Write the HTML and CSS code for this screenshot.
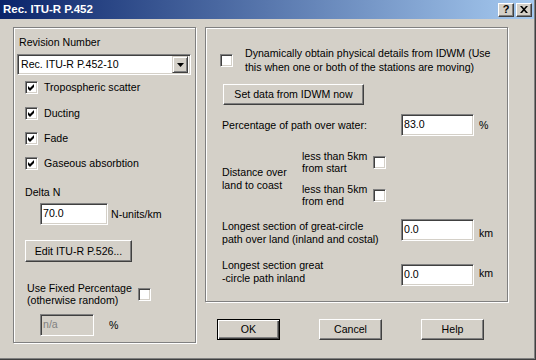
FILE: index.html
```html
<!DOCTYPE html>
<html lang="en">
<head>
  <meta charset="UTF-8" />
  <title>Rec. ITU-R P.452</title>
  <link rel="stylesheet" href="styles.css">
</head>
<body>

<div class="window">
  <div class="titlebar">
    <span class="title">Rec. ITU-R P.452</span>
    <div class="caption-btns">
      <span class="cap-btn">?</span>
      <span class="cap-btn">
        <svg width="8" height="7" viewBox="0 0 8 7"><path d="M0 0h2l2 2.2L6 0h2L5 3.5 8 7H6L4 4.8 2 7H0l3-3.5z" fill="#000"/></svg>
      </span>
    </div>
  </div>

  <div class="client">
    <!-- left group -->
    <div class="group left-group">
      <div class="lbl">Revision Number</div>
      <div class="combo">
        <span class="combo-text">Rec. ITU-R P.452-10</span>
        <span class="drop"><svg width="7" height="4" viewBox="0 0 7 4"><path d="M0 0h7L3.5 4z" fill="#000"/></svg></span>
      </div>
      <div class="checks">
        <div class="check-row"><span class="check on"><svg width="11" height="11" viewBox="0 0 11 11"><path d="M2 4l2 2 4-4v3l-4 4-2-2z" fill="#000"/></svg></span>Tropospheric scatter</div>
        <div class="check-row"><span class="check on"><svg width="11" height="11" viewBox="0 0 11 11"><path d="M2 4l2 2 4-4v3l-4 4-2-2z" fill="#000"/></svg></span>Ducting</div>
        <div class="check-row"><span class="check on"><svg width="11" height="11" viewBox="0 0 11 11"><path d="M2 4l2 2 4-4v3l-4 4-2-2z" fill="#000"/></svg></span>Fade</div>
        <div class="check-row"><span class="check on"><svg width="11" height="11" viewBox="0 0 11 11"><path d="M2 4l2 2 4-4v3l-4 4-2-2z" fill="#000"/></svg></span>Gaseous absorbtion</div>
      </div>
      <div class="lbl delta-label">Delta N</div>
      <div class="delta-row">
        <span class="field delta-field">70.0</span>
        <span>N-units/km</span>
      </div>
      <button class="btn edit-btn">Edit ITU-R P.526...</button>
      <div class="fixed-row">
        <span class="tight">Use Fixed Percentage<br>(otherwise random)</span>
        <span class="check"></span>
      </div>
      <div class="na-row">
        <span class="field disabled na-field">n/a</span>
        <span>%</span>
      </div>
    </div>

    <!-- right column -->
    <div class="right-col">
      <div class="group right-group">
        <div class="dyn-row">
          <span class="check"></span>
          <span class="dyn-text">Dynamically obtain physical details from IDWM (Use<br>this when one or both of the stations are moving)</span>
        </div>
        <button class="btn idwm-btn">Set data from IDWM now</button>

        <div class="form-row water-row">
          <span>Percentage of path over water:</span>
          <span class="field num-field">83.0</span>
          <span class="unit">%</span>
        </div>

        <div class="coast-row">
          <span class="coast-label">Distance over<br>land to coast</span>
          <div class="coast-opts">
            <div class="coast-opt">
              <span class="tight">less than 5km<br>from start</span>
              <span class="check"></span>
            </div>
            <div class="coast-opt">
              <span class="tight">less than 5km<br>from end</span>
              <span class="check"></span>
            </div>
          </div>
        </div>

        <div class="form-row land-row">
          <span>Longest section of great-circle<br>path over land (inland and costal)</span>
          <span class="field num-field">0.0</span>
          <span class="unit">km</span>
        </div>

        <div class="form-row inland-row">
          <span>Longest section great<br>-circle path inland</span>
          <span class="field num-field">0.0</span>
          <span class="unit">km</span>
        </div>
      </div>

      <div class="dlg-buttons">
        <button class="btn default-btn">OK</button>
        <button class="btn">Cancel</button>
        <button class="btn">Help</button>
      </div>
    </div>
  </div>
</div>

</body>
</html>
```

FILE: styles.css
```css
* {
  box-sizing: border-box;
}
body {
  margin: 0;
  font-family: 'Liberation Sans', Arial, sans-serif;
  font-size: 10.6px;
  line-height: 13px;
  color: #000;
  background: #d4d0c8;
}
.window {
  width: 536px;
  height: 360px;
  background: #d4d0c8;
  border-right: 1px solid #404040;
  border-bottom: 1px solid #404040;
  box-shadow: inset -1px -1px 0 #808080;
  overflow: hidden;
}
.titlebar {
  height: 19px;
  margin-right: 1px;
  background: linear-gradient(90deg, #0a246a, #a6caf0);
  display: flex;
  align-items: center;
  justify-content: space-between;
  padding: 0 2px 0 3px;
}
.title {
  color: #fff;
  font-weight: bold;
  font-size: 11.5px;
}
.caption-btns {
  display: flex;
  gap: 2px;
}
.cap-btn {
  width: 16px;
  height: 14px;
  background: #d4d0c8;
  border: 1px solid;
  border-color: #fff #404040 #404040 #fff;
  box-shadow: inset -1px -1px 0 #808080;
  display: flex;
  align-items: center;
  justify-content: center;
  font-weight: bold;
  font-size: 11px;
  line-height: 11px;
}

/* etched group boxes */
.client {
  display: flex;
  padding: 8px 0 0 13px;
}
.group {
  border: 1px solid #808080;
  box-shadow: inset 1px 1px 0 #fff, 1px 1px 0 #fff;
}
.left-group {
  width: 183px;
  height: 316px;
  padding: 8px 0 0 5px;
}
.right-col {
  margin-left: 9px;
}
.right-group {
  width: 303px;
  height: 275px;
  padding-top: 18px;
}

/* controls */
.field {
  display: block;
  height: 22px;
  background: #fff;
  border: 1px solid;
  border-color: #808080 #fff #fff #808080;
  box-shadow: inset 1px 1px 0 #404040, inset -1px -1px 0 #d4d0c8;
  padding: 3px 0 0 2px;
}
.field.disabled {
  background: #d4d0c8;
  color: #808080;
}
.check {
  flex: none;
  width: 13px;
  height: 13px;
  background: #fff;
  border: 1px solid;
  border-color: #808080 #fff #fff #808080;
  box-shadow: inset 1px 1px 0 #404040, inset -1px -1px 0 #d4d0c8;
}
.check svg {
  display: block;
}
.btn {
  font: inherit;
  color: #000;
  background: #d4d0c8;
  border: 1px solid;
  border-color: #fff #404040 #404040 #fff;
  box-shadow: inset -1px -1px 0 #808080;
  padding: 0;
  display: block;
}
.tight {
  line-height: 12px;
  white-space: nowrap;
}

/* left group */
.combo {
  display: flex;
  align-items: center;
  justify-content: space-between;
  width: 174px;
  height: 21px;
  margin: 5px 0 0 -2px;
  background: #fff;
  border: 1px solid;
  border-color: #808080 #fff #fff #808080;
  box-shadow: inset 1px 1px 0 #404040, inset -1px -1px 0 #d4d0c8;
  padding: 2px 2px 2px 3px;
}
.drop {
  width: 16px;
  height: 17px;
  background: #d4d0c8;
  border: 1px solid;
  border-color: #d4d0c8 #404040 #404040 #d4d0c8;
  box-shadow: inset 1px 1px 0 #fff, inset -1px -1px 0 #808080;
  display: flex;
  align-items: center;
  justify-content: center;
}
.checks {
  margin: 6px 0 0 6px;
}
.check-row {
  display: flex;
  align-items: center;
  gap: 6px;
  height: 13px;
}
.check-row + .check-row {
  margin-top: 12px;
}
.check-row:nth-child(2) {
  margin-top: 13px;
}
.delta-label {
  margin: 16px 0 0 6px;
}
.delta-row {
  display: flex;
  align-items: center;
  gap: 3px;
  margin: 4px 0 0 21px;
}
.delta-field {
  width: 68px;
}
.edit-btn {
  width: 107px;
  height: 22px;
  margin: 15px 0 0 6px;
}
.fixed-row {
  display: flex;
  align-items: center;
  gap: 6px;
  margin: 20px 0 0 8px;
}
.na-row {
  display: flex;
  align-items: center;
  gap: 15px;
  margin: 8px 0 0 21px;
}
.na-field {
  width: 54px;
}

/* right group */
.dyn-row {
  display: flex;
  align-items: center;
  gap: 12px;
  padding-left: 14px;
  line-height: 14px;
}
.idwm-btn {
  width: 141px;
  height: 21px;
  margin: 10px 0 0 17px;
}
.form-row {
  display: grid;
  grid-template-columns: 174px 73px auto;
  align-items: center;
  column-gap: 5px;
  margin-left: 16px;
}
.water-row {
  margin-top: 9px;
}
.num-field {
  width: 73px;
}
.coast-row {
  display: flex;
  align-items: center;
  margin: 14px 0 0 16px;
}
.coast-label {
  width: 80px;
}
.coast-opts {
  display: flex;
  flex-direction: column;
  gap: 9px;
}
.coast-opt {
  display: flex;
  align-items: center;
  gap: 6px;
}
.land-row {
  margin-top: 12px;
  align-items: start;
}
.land-row span:first-child {
  padding-top: 1px;
}
.inland-row {
  margin-top: 13px;
  align-items: start;
}
.inland-row .field {
  margin-top: 5px;
}
.inland-row .unit {
  margin-top: 8px;
}
.land-row .unit {
  margin-top: 8px;
}

/* dialog buttons */
.dlg-buttons {
  display: flex;
  gap: 39px;
  margin: 17px 0 0 12px;
}
.dlg-buttons .btn {
  width: 63px;
  height: 21px;
}
.default-btn {
  border: 1px solid #000;
  box-shadow: inset 1px 1px 0 #fff, inset -1px -1px 0 #404040, inset -2px -2px 0 #808080;
}
```
